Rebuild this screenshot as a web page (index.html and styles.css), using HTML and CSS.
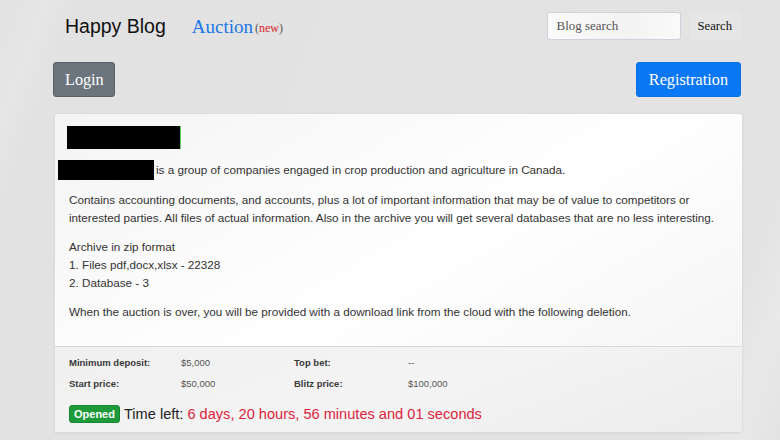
FILE: index.html
```html
<!DOCTYPE html>
<html>
<head>
<meta charset="utf-8">
<link rel="stylesheet" href="styles.css">
</head>
<body>
<div class="page">
  <header class="topbar">
    <div class="brand">Happy Blog</div>
    <a class="auction" href="#">Auction</a><span class="new">(<span class="new-word">new</span>)</span>
    <form class="search">
      <input class="search-input" type="text" placeholder="Blog search">
      <button class="search-btn" type="button">Search</button>
    </form>
  </header>
  <div class="actions">
    <button class="btn btn-grey" type="button">Login</button>
    <button class="btn btn-blue" type="button">Registration</button>
  </div>
  <div class="card">
    <div class="card-body">
      <div class="title"><span class="redact-title"></span></div>
      <p class="lead"><span class="redact-name"></span>is a group of companies engaged in crop production and agriculture in Canada.</p>
      <div class="desc">
        <p>Contains accounting documents, and accounts, plus a lot of important information that may be of value to competitors or interested parties. All files of actual information. Also in the archive you will get several databases that are no less interesting.</p>
        <p>Archive in zip format<br>1. Files pdf,docx,xlsx - 22328<br>2. Database - 3</p>
        <p>When the auction is over, you will be provided with a download link from the cloud with the following deletion.</p>
      </div>
    </div>
    <div class="card-footer">
      <div class="stats">
        <div class="label">Minimum deposit:</div><div class="value">$5,000</div>
        <div class="label">Top bet:</div><div class="value">--</div>
        <div class="label">Start price:</div><div class="value">$50,000</div>
        <div class="label">Blitz price:</div><div class="value">$100,000</div>
      </div>
      <div class="timer"><span class="badge">Opened</span> Time left: <span class="time-red">6 days, 20 hours, 56 minutes and 01 seconds</span></div>
    </div>
  </div>
</div>
</body>
</html>
```
FILE: styles.css
```css
html, body {
  margin: 0;
  padding: 0;
}
body {
  background: linear-gradient(110deg, #e2e2e2 0%, #e6e6e6 5%, #e2e2e2 8%, #e3e3e3 90%, #e9e9e9 95%, #e3e3e3 100%);
  font-family: "Liberation Sans", Arial, sans-serif;
  height: 440px;
  overflow: hidden;
}
.page {
  width: 688px;
  margin-left: 53px;
}
.topbar {
  display: flex;
  align-items: center;
  height: 52px;
  padding-left: 12px;
}
.brand {
  font-size: 19.5px;
  color: #111;
  margin-right: 26px;
  margin-top: 1px;
}
.auction {
  font-family: "Liberation Serif", "Times New Roman", serif;
  font-size: 19px;
  color: #1a76e8;
  text-decoration: none;
  margin-top: 1px;
}
.new {
  font-family: "Liberation Serif", "Times New Roman", serif;
  font-size: 12px;
  color: #555;
  margin-left: 2px;
  margin-top: 5px;
}
.new-word {
  color: #d81f2a;
}
.search {
  margin-left: auto;
  display: flex;
  align-items: center;
}
.search-input {
  box-sizing: border-box;
  width: 134px;
  height: 28px;
  border: 1px solid #cfd2dc;
  border-radius: 3px;
  padding: 0 8px;
  font-family: "Liberation Serif", "Times New Roman", serif;
  font-size: 13px;
  background: linear-gradient(90deg, #fafafa, #f3f3f3 60%, #fafafa);
}
.search-input::placeholder {
  color: #555;
}
.search-btn {
  height: 28px;
  border: none;
  background: #e6e6e6;
  font-family: "Liberation Serif", "Times New Roman", serif;
  font-size: 12.7px;
  color: #111;
  padding: 0 9px 0 8px;
  margin-left: 8px;
}
.actions {
  display: flex;
  justify-content: space-between;
  margin-top: 10px;
}
.btn {
  box-sizing: border-box;
  height: 35px;
  border-radius: 3px;
  font-family: "Liberation Serif", "Times New Roman", serif;
  font-size: 16.2px;
  color: #fff;
  padding: 2px 12px 0 12px;
}
.btn-grey {
  background: #6c757d;
  border: 1px solid #596168;
  padding-left: 11px;
  padding-right: 10px;
}
.btn-blue {
  background: #0a78f5;
  border: 1px solid #0a6fe0;
}
.card {
  margin-top: 16px;
  margin-left: 1px;
  width: 687px;
  background: linear-gradient(150deg, #f4f4f4 0%, #ffffff 50%, #f2f2f2 100%);
  border: 1px solid #dcdcdc;
  border-radius: 3px;
  box-shadow: 0 1px 2px rgba(0,0,0,0.06);
}
.card-body {
  padding: 12px 15px 12px 14px;
  font-size: 11.7px;
  color: #333;
}
.title {
  height: 24px;
  margin-left: -2px;
}
.redact-title {
  display: inline-block;
  width: 113px;
  height: 23px;
  background: #000;
  border-right: 1px solid #5ecf5e;
}
.lead {
  margin: 10px 0 0 -11px;
  line-height: 20px;
  display: flex;
  align-items: center;
}
.redact-name {
  display: inline-block;
  width: 96px;
  height: 20px;
  background: #000;
  margin-right: 2px;
}
.desc {
  margin-top: 11px;
  line-height: 18px;
}
.desc p {
  margin: 0 0 11px 0;
}
.desc p:last-child {
  margin-bottom: 13px;
}
.card-footer {
  background: linear-gradient(160deg, #f0f0f0, #f4f4f4 50%, #ececec);
  border-top: 1px solid #d9d9d9;
  padding: 8px 15px 9px 14px;
}
.stats {
  display: grid;
  grid-template-columns: 112px 113px 114px 100px;
  row-gap: 5px;
  font-size: 9.5px;
  line-height: 16px;
  color: #444;
}
.label {
  font-weight: bold;
  color: #3a3a3a;
}
.value {
  color: #555;
}
.timer {
  margin-top: 13px;
  font-size: 14.6px;
  color: #222;
  display: flex;
  align-items: center;
  gap: 4px;
}
.badge {
  display: inline-block;
  background: #1e9a3a;
  color: #fff;
  font-weight: bold;
  font-size: 11px;
  line-height: 16px;
  padding: 0 4px;
  border-radius: 3px;
  border: 1px solid #16882f;
}
.time-red {
  color: #dc1f3c;
}
```
